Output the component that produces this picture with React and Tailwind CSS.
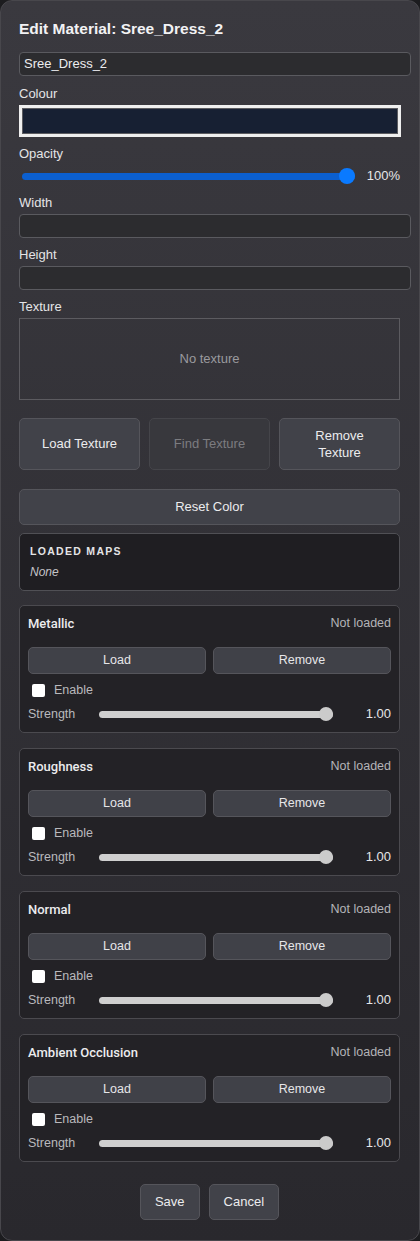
import React from 'react';

const font = { fontFamily: '"Liberation Sans", Arial, sans-serif' };

const MapCard = ({ name }) => (
  <div className="rounded-[5px] border border-[#4b4a4f] bg-[#232226] pl-[8px] pr-[8px] pt-[9px] pb-[8px]">
    <div className="flex items-center justify-between h-[17px]">
      <span className="text-[13px] font-medium text-[#ececee] font-['Roboto',sans-serif]">{name}</span>
      <span className="text-[12.5px] text-[#b4b4b8]">Not loaded</span>
    </div>
    <div className="mt-[15px] flex gap-[7px]">
      <button className="flex-1 h-[27px] rounded-[5px] border border-[#55555b] bg-[#404148] text-[12.5px] text-[#e6e6e8]">Load</button>
      <button className="flex-1 h-[27px] rounded-[5px] border border-[#55555b] bg-[#404148] text-[12.5px] text-[#e6e6e8]">Remove</button>
    </div>
    <div className="mt-[4px] flex items-center h-[24px] pl-[4px]">
      <span className="w-[13px] h-[13px] rounded-[2px] bg-white" />
      <span className="ml-[9px] text-[12.5px] text-[#b9b9bd]">Enable</span>
    </div>
    <div className="flex items-center h-[20px] mt-[2px]">
      <span className="w-[71px] text-[12.5px] text-[#b9b9bd]">Strength</span>
      <div className="relative flex-1 h-[14px] flex items-center">
        <div className="w-full h-[7px] rounded-full bg-[#cfcfcf]" />
        <div className="absolute right-0 w-[14px] h-[14px] rounded-full bg-[#cbcbcb]" />
      </div>
      <span className="w-[58px] text-right text-[13px] text-[#e6e6e8]">1.00</span>
    </div>
  </div>
);

export default function App() {
  return (
    <div className="min-h-screen bg-[#1c1c1f]" style={font}>
      <div className="w-[420px] min-h-[1241px] rounded-[12px] border border-[#48474c] bg-gradient-to-b from-[#3a393f] to-[#29282d] pl-[18px] pr-[19px] pt-[19px] pb-[20px]">
        <h1 className="text-[15.5px] font-bold text-[#f2f2f4] leading-[18px]">Edit Material: Sree_Dress_2</h1>

        <div className="mt-[14px] w-[392px] h-[24px] rounded-[4px] border border-[#5a5a5f] bg-[#2c2c2f] px-[4px] flex items-center text-[13px] text-[#ededef]">
          Sree_Dress_2
        </div>

        <div className="mt-[10px] h-[16px] text-[13px] leading-[16px] text-[#e4e4e6]">Colour</div>
        <div className="mt-[3px] h-[32px] w-[382px] border-[3px] border-[#efefef]">
          <div className="h-full w-full border border-[#5c5c60] bg-[#172033]" />
        </div>

        <div className="mt-[9px] h-[16px] text-[13px] leading-[16px] text-[#e4e4e6]">Opacity</div>
        <div className="mt-[2px] flex items-center h-[24px]">
          <div className="relative ml-[3px] w-[334px] h-[16px] flex items-center">
            <div className="w-full h-[7px] rounded-full bg-[#0b5fcf]" />
            <div className="absolute right-0 w-[16px] h-[16px] rounded-full bg-[#0a7aff]" />
          </div>
          <span className="ml-[12px] text-[13px] text-[#e6e6e8]">100%</span>
        </div>

        <div className="mt-[7px] h-[16px] text-[13px] leading-[16px] text-[#e4e4e6]">Width</div>
        <div className="mt-[3px] w-[392px] h-[24px] rounded-[4px] border border-[#5a5a5f] bg-[#2c2c2f]" />

        <div className="mt-[9px] h-[16px] text-[13px] leading-[16px] text-[#e4e4e6]">Height</div>
        <div className="mt-[3px] w-[392px] h-[24px] rounded-[4px] border border-[#5a5a5f] bg-[#2c2c2f]" />

        <div className="mt-[9px] h-[16px] text-[13px] leading-[16px] text-[#e4e4e6]">Texture</div>
        <div className="mt-[3px] h-[82px] border border-[#5c5b60] flex items-center justify-center text-[13px] text-[#9a9a9e]">
          No texture
        </div>

        <div className="mt-[18px] grid grid-cols-3 gap-[9px]">
          <button className="h-[52px] rounded-[5px] border border-[#55555b] bg-[#414249] text-[13px] text-[#ececee]">Load Texture</button>
          <button className="h-[52px] rounded-[5px] border border-[#45454a] bg-[#38383d] text-[13px] text-[#7c7c80]">Find Texture</button>
          <button className="h-[52px] rounded-[5px] border border-[#55555b] bg-[#414249] text-[13px] leading-[17px] text-[#ececee]">Remove<br />Texture</button>
        </div>

        <button className="mt-[19px] w-full h-[36px] rounded-[5px] border border-[#55555b] bg-[#414249] text-[13px] text-[#ececee]">Reset Color</button>

        <div className="mt-[8px] h-[58px] rounded-[5px] border border-[#505055] bg-[#1f1e22] px-[10px] pt-[11px]">
          <div className="text-[10.5px] font-bold tracking-[1.3px] text-[#e4e4e6] leading-[13px]">LOADED MAPS</div>
          <div className="mt-[7px] text-[12px] italic text-[#c4c4c8] leading-[14px]">None</div>
        </div>

        <div className="mt-[14px] flex flex-col gap-[15px]">
          <MapCard name="Metallic" />
          <MapCard name="Roughness" />
          <MapCard name="Normal" />
          <MapCard name="Ambient Occlusion" />
        </div>

        <div className="mt-[22px] flex justify-center gap-[9px]">
          <button className="h-[36px] px-[14px] rounded-[5px] border border-[#55555b] bg-[#414249] text-[13px] text-[#ececee]">Save</button>
          <button className="h-[36px] px-[14px] rounded-[5px] border border-[#55555b] bg-[#414249] text-[13px] text-[#ececee]">Cancel</button>
        </div>
      </div>
    </div>
  );
}
